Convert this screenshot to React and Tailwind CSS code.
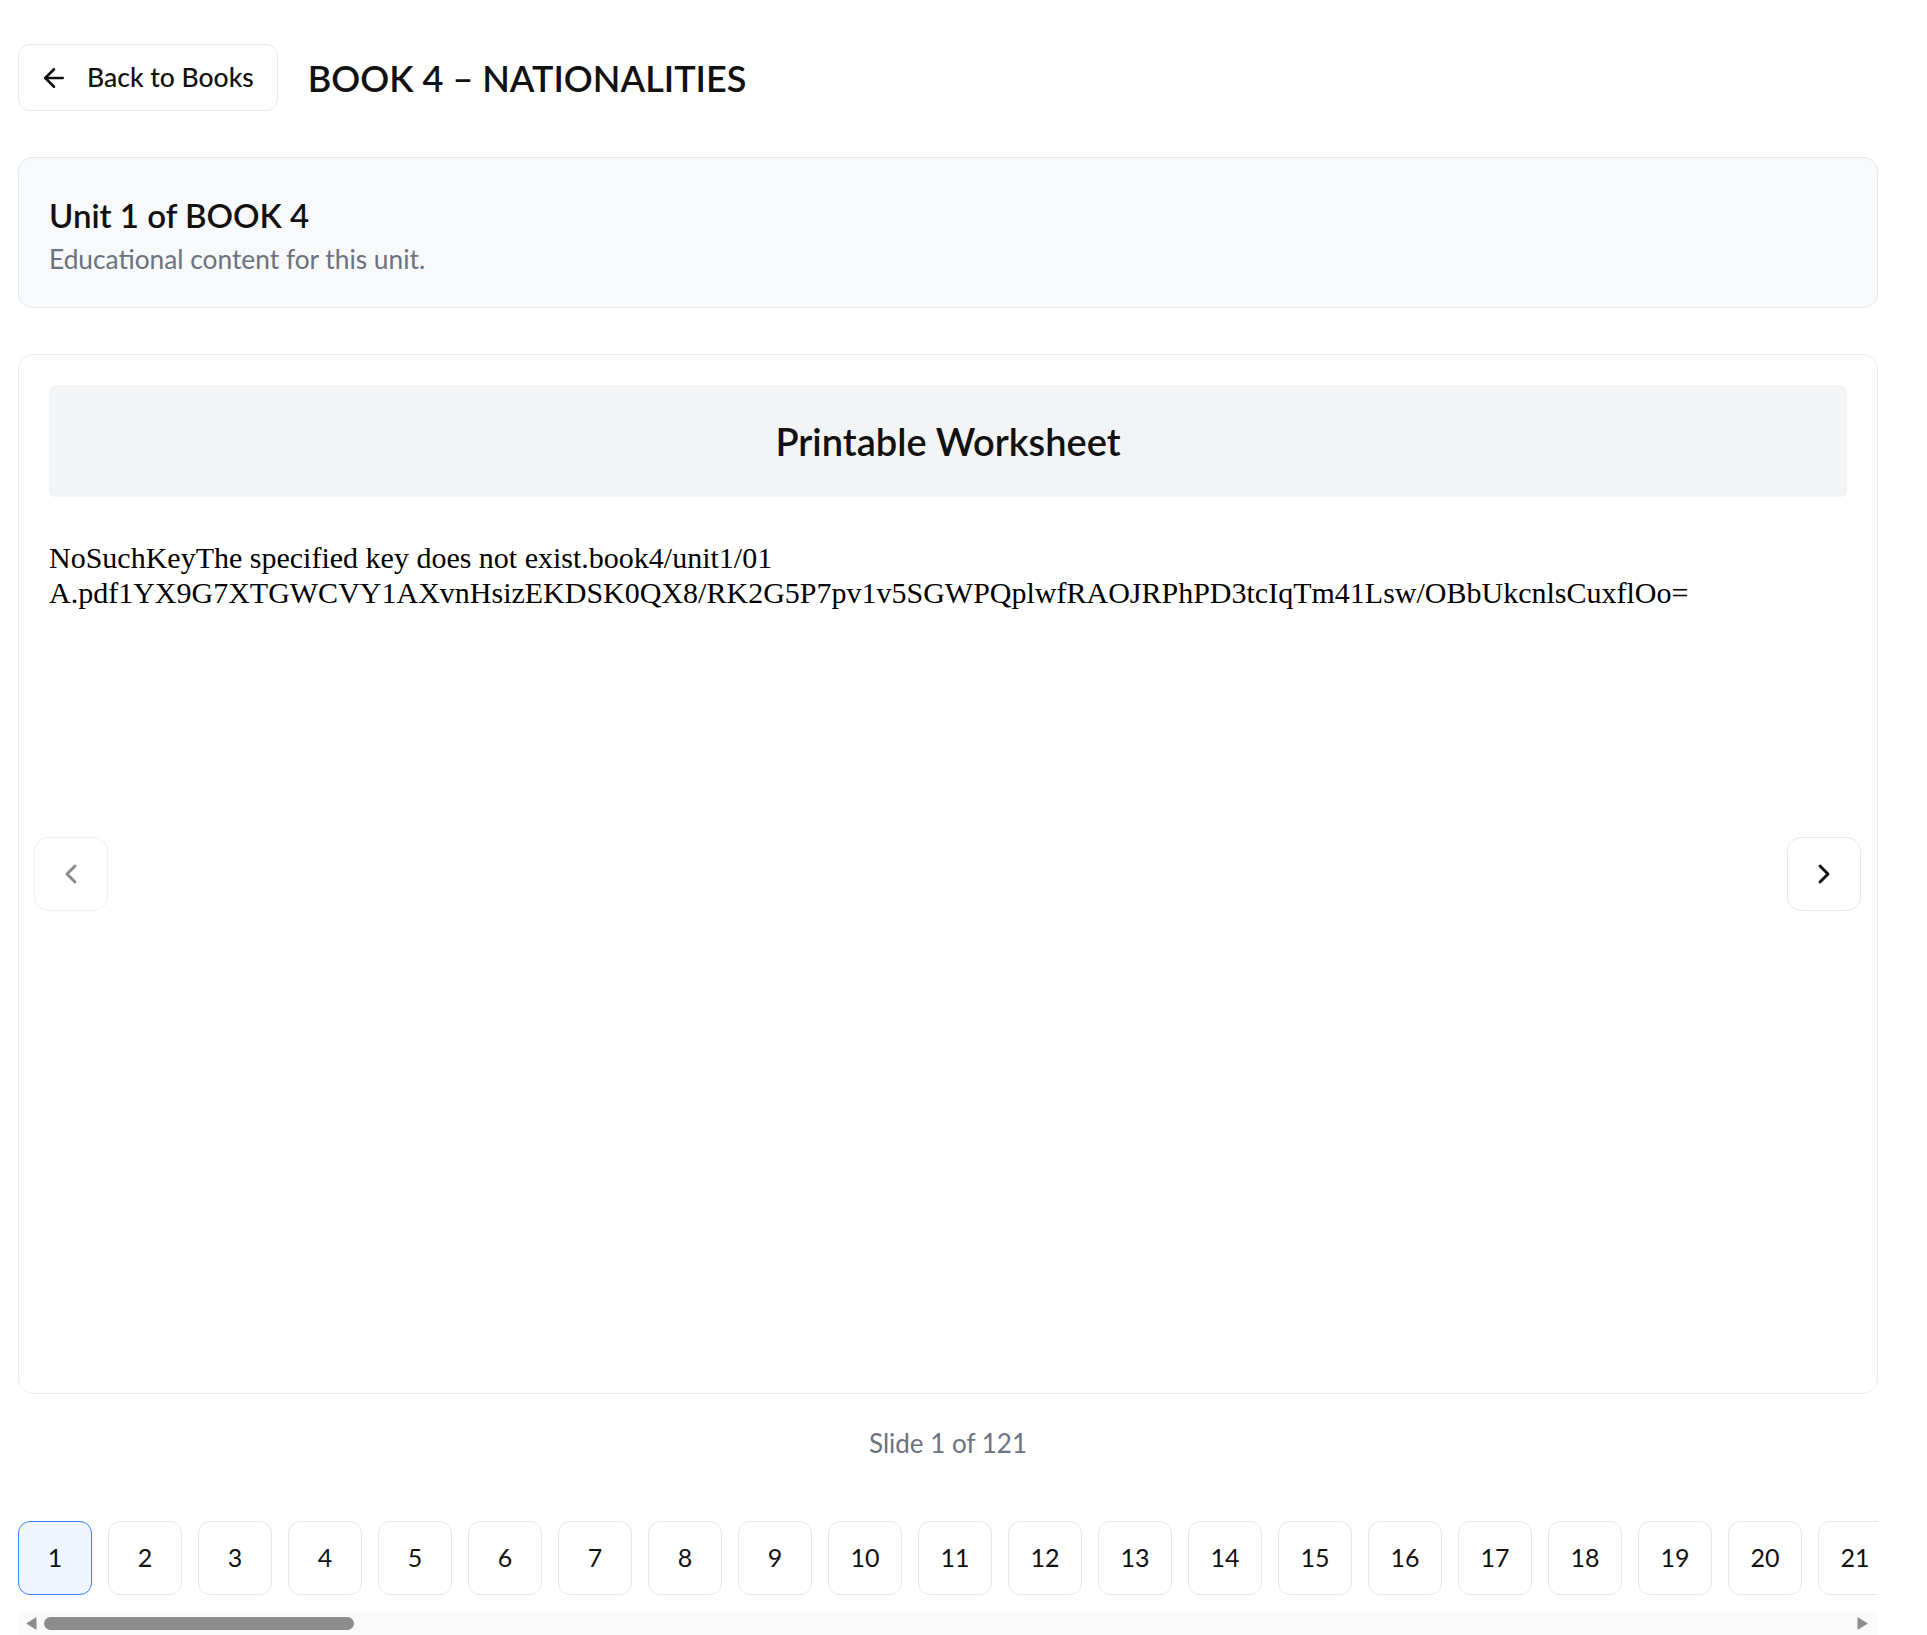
import { ArrowLeft, ChevronLeft, ChevronRight } from "lucide-react";

const TOTAL_SLIDES = 121;

const errorText =
  "NoSuchKeyThe specified key does not exist.book4/unit1/01 A.pdf1YX9G7XTGWCVY1AXvnHsizEKDSK0QX8/RK2G5P7pv1v5SGWPQplwfRAOJRPhPD3tcIqTm41Lsw/OBbUkcnlsCuxflOo=";

// drawn scrollbar under the thumbnail strip
function ScrollTrack({ thumbWidth }) {
  return (
    <div className="flex h-[23px] items-center bg-[#fafafa]">
      <div className="flex h-full w-[26px] items-center justify-center">
        <svg width="11" height="13" viewBox="0 0 11 13">
          <path d="M10.5 0.8 L10.5 12.2 Q10.5 13 9.8 12.6 L0.9 7.1 Q0 6.5 0.9 5.9 L9.8 0.4 Q10.5 0 10.5 0.8 Z" fill="#8c8c8c" />
        </svg>
      </div>
      <div
        className="h-[13px] rounded-full bg-[#8c8c8c]"
        style={{ width: thumbWidth }}
      />
      <div className="flex-1" />
      <div className="flex h-full w-[23px] items-center justify-start pl-[2px]">
        <svg width="11" height="13" viewBox="0 0 11 13">
          <path d="M0.5 0.8 L0.5 12.2 Q0.5 13 1.2 12.6 L10.1 7.1 Q11 6.5 10.1 5.9 L1.2 0.4 Q0.5 0 0.5 0.8 Z" fill="#8c8c8c" />
        </svg>
      </div>
    </div>
  );
}

export default function App() {
  const current = 1;
  const slides = Array.from({ length: TOTAL_SLIDES }, (_, i) => i + 1);

  return (
    <div className="bg-white pl-[18px] pr-[49px] pt-[44px] text-[#111] [font-family:Lato,sans-serif]">
      {/* Header */}
      <div className="flex items-center gap-[30px]">
        <button className="flex h-[67px] items-center gap-[18px] rounded-[12px] border border-[#e5e7eb] bg-white pl-[20px] pr-[23px] text-[26.5px] font-medium">
          <ArrowLeft size={30} strokeWidth={2} />
          Back to Books
        </button>
        <h1 className="text-[36px] font-semibold leading-[48px]">
          BOOK 4 – NATIONALITIES
        </h1>
      </div>

      {/* Unit info */}
      <div className="mt-[46px] rounded-[14px] border border-[#e5e7eb] bg-[#f8f9fa] px-[30px] pb-[32px] pt-[37px]">
        <h2 className="text-[33px] font-semibold leading-[40px]">
          Unit 1 of BOOK 4
        </h2>
        <p className="mt-[8px] text-[26.3px] leading-[32px] text-[#6b7280]">
          Educational content for this unit.
        </p>
      </div>

      {/* Slide viewer */}
      <div className="relative mt-[46px] h-[1040px] rounded-[15px] border border-[#ebebeb] bg-white p-[30px]">
        <div className="flex h-[112px] items-center justify-center rounded-[6px] bg-[#f3f4f6]">
          <h3 className="text-[38px] font-semibold">Printable Worksheet</h3>
        </div>
        <div className="mt-[44px] text-[30px] leading-[34.5px] text-black [font-family:'Liberation_Serif',serif]">
          {errorText}
        </div>

        <button className="absolute left-[15px] top-1/2 flex h-[74px] w-[74px] -translate-y-1/2 items-center justify-center rounded-[14px] border border-[#efefef] bg-white text-[#8a8a8a]">
          <ChevronLeft size={32} strokeWidth={2.2} />
        </button>
        <button className="absolute right-[16px] top-1/2 flex h-[74px] w-[74px] -translate-y-1/2 items-center justify-center rounded-[14px] border border-[#e8e8e8] bg-white text-[#111]">
          <ChevronRight size={32} strokeWidth={2.2} />
        </button>
      </div>

      <p className="mt-[33px] text-center text-[26px] leading-[32px] text-[#6b7280]">
        Slide {current} of {TOTAL_SLIDES}
      </p>

      {/* Thumbnails */}
      <div className="mt-[62px]">
        <div className="flex gap-[16px] overflow-x-auto pb-[17px] [scrollbar-width:none]">
          {slides.map((n) => (
            <button
              key={n}
              className={
                n === current
                  ? "flex h-[74px] w-[74px] shrink-0 items-center justify-center rounded-[12px] border-[1.5px] border-[#3b82f6] bg-[#eff6ff] text-[25px] text-[#111]"
                  : "flex h-[74px] w-[74px] shrink-0 items-center justify-center rounded-[12px] border border-[#e5e7eb] bg-white text-[25px] text-[#111]"
              }
            >
              {n}
            </button>
          ))}
        </div>
        <ScrollTrack thumbWidth={310} />
      </div>
    </div>
  );
}
